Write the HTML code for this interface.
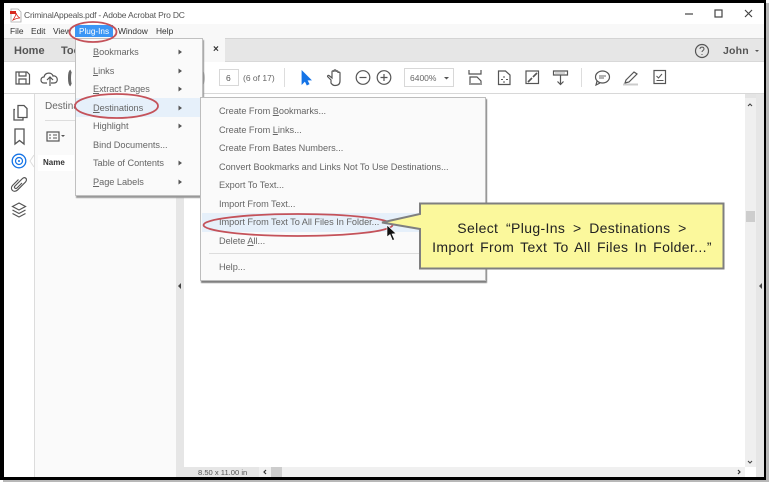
<!DOCTYPE html>
<html><head><meta charset="utf-8">
<style>
html,body{margin:0;padding:0;background:#fff}
#p{position:relative;width:769px;height:482px;overflow:hidden;background:#fff;font-family:"Liberation Sans",sans-serif;color:#555}
#p div{position:absolute}
.t{white-space:nowrap;font-size:8.6px;line-height:12px;filter:blur(.3px)}
.m{font-size:9.2px;color:#666;letter-spacing:-.03px;white-space:nowrap;line-height:12px;filter:blur(.3px)}
u{text-decoration:underline}
svg.i{filter:blur(.3px)}
</style></head><body>
<div id="p">
<!-- shadow -->
<div style="left:3px;top:3px;width:766px;height:479px;background:#b8b8b8"></div>
<div style="left:0;top:0;width:766px;height:480px;background:#000"></div>
<div id="w" style="left:4px;top:3px;width:760px;height:474px;background:#fff;overflow:hidden"></div>

<div style="left:4px;top:24px;width:760px;height:14px;background:#f8f8f8"></div>
<div style="left:4px;top:38px;width:760px;height:24px;background:#e6e6e6;border-top:1px solid #d4d4d4;border-bottom:1px solid #d8d8d8;box-sizing:border-box"></div>
<div style="left:203px;top:38px;width:22px;height:24px;background:#f8f8f8"></div>
<div style="left:4px;top:93px;width:760px;height:1px;background:#d8d8d8"></div>
<!-- left panels -->
<div style="left:4px;top:94px;width:30px;height:383px;background:#fff"></div>
<div style="left:34px;top:94px;width:1px;height:383px;background:#dcdcdc"></div>
<div style="left:35px;top:94px;width:141px;height:383px;background:#fafafa"></div>
<div style="left:176px;top:94px;width:8px;height:383px;background:#e6e6e6"></div>
<div style="left:38px;top:155px;width:36px;height:16px;background:#fff"></div>
<!-- right scroll -->
<div style="left:745px;top:94px;width:11px;height:373px;background:#efefef"></div>
<div style="left:745px;top:94px;width:11px;height:4px;background:#e4e4e4"></div>
<div style="left:746px;top:211px;width:9px;height:11px;background:#cdcdcd"></div>
<div style="left:756px;top:94px;width:8px;height:383px;background:#e6e6e6"></div>
<div style="left:184px;top:467px;width:561px;height:10px;background:#f0f0f0"></div>
<div style="left:271px;top:467px;width:11px;height:10px;background:#cdcdcd"></div>
<div style="left:184px;top:467px;width:75px;height:10px;background:#e6e6e6"></div>

<!-- text top -->
<div class="t" style="left:24px;top:9px;color:#555;font-size:8.5px;letter-spacing:-.2px">CriminalAppeals.pdf - Adobe Acrobat Pro DC</div>
<div class="t" style="left:10px;top:25px;color:#333;font-size:8.4px">File</div>
<div class="t" style="left:31px;top:25px;color:#333;font-size:8.4px">Edit</div>
<div class="t" style="left:53px;top:25px;color:#333;font-size:8.4px">View</div>
<div style="left:75px;top:25px;width:38px;height:12px;background:#3b96f5"></div>
<div class="t" style="left:79px;top:26px;color:#fff;font-size:8.2px">Plug-Ins</div>
<div class="t" style="left:118px;top:25px;color:#333;font-size:8.4px">Window</div>
<div class="t" style="left:156px;top:25px;color:#333;font-size:8.4px">Help</div>
<div class="t" style="left:14px;top:44px;color:#555;font-size:11px;font-weight:bold;line-height:14px">Home</div>
<div class="t" style="left:61px;top:44px;color:#555;font-size:11px;font-weight:bold;line-height:14px">Tools</div>
<div class="t" style="left:213px;top:44px;color:#333;font-size:10px;font-weight:bold">×</div>
<div class="t" style="left:723px;top:44px;color:#555;font-size:10.5px;font-weight:bold;line-height:14px;letter-spacing:.2px">John</div>
<div class="t" style="left:45px;top:101px;color:#666;font-size:10px">Destinations</div>
<div style="left:45px;top:120px;width:125px;height:1px;background:#ddd"></div>
<div class="t" style="left:43px;top:157px;color:#333;font-size:8px;font-weight:bold">Name</div>
<div style="left:219px;top:69px;width:20px;height:17px;border:1px solid #d8d8d8;background:#fff;box-sizing:border-box"></div>
<div class="t" style="left:226px;top:72px;color:#555;font-size:8.5px">6</div>
<div class="t" style="left:243px;top:72px;color:#666;font-size:8.5px">(6 of 17)</div>
<div style="left:404px;top:68px;width:50px;height:19px;border:1px solid #d8d8d8;background:#fff;box-sizing:border-box"></div>
<div class="t" style="left:410px;top:72px;color:#666;font-size:8.5px">6400%</div>
<div class="t" style="left:198px;top:467px;color:#555;font-size:7.6px;line-height:12px">8.50 x 11.00 in</div>

<!-- toolbar icons -->
<svg class="i" style="position:absolute;left:0;top:0" width="769" height="482" fill="none" stroke="#555" stroke-width="1.2">
<path d="M11 9h7l3 3v10H11z" fill="#fff" stroke="#aaa" stroke-width=".8"/><path d="M10 11h6v3h-6z" fill="#d8281e" stroke="none"/><path d="M13 20c2-3 3-5 3-7 1 3 2 4 4 5-3 0-5 1-7 2z" stroke="#d8281e" stroke-width=".8"/>
<path d="M685 14h8" stroke="#444"/><rect x="715" y="10" width="7" height="7" stroke="#444"/><path d="M745 10l7 7M752 10l-7 7" stroke="#444"/>
<circle cx="702" cy="51" r="6.500"/><path d="M700 49c0-2.500 4-2.500 4 0 0 1.500-2 1.500-2 3M702 54v1" stroke-width="1"/>
<path d="M755 50h4l-2 2z" fill="#555" stroke="none"/>
<path d="M16 72h11l2.500 2.500V84H16zM19 72v4h7v-4M19 84v-5h7v5"/>
<path d="M47 83h-3c-4 0-4-6 0-6 1-5 8-5 9-1 5-1 6 7 1 7h-3M50 86v-9M47 80l3-3 3 3"/>
<path d="M71 71c-2 1-2 13 0 14" stroke-width="3" stroke="#666"/>
<path d="M203 72c1 3 1 9 0 12" stroke="#777" stroke-width="1.500"/>
<path d="M284.500 68v19M581.500 68v19" stroke="#ddd" stroke-width="1"/>
<path d="M302 71l0 13 3-3 2 4 2-1-2-4 4 0z" fill="#1473e6" stroke="#1473e6" stroke-width=".8"/>
<path d="M331 80l-3-3c-1-1 0-2 1-1.500l3 2.500v-6c0-1.500 2-1.500 2 0v-1c0-1.500 2-1.500 2 0v1c0-1.500 2-1.500 2 0v1c0-1.200 2-1.200 2 0v8c0 3-2 4.500-5 4.500-2 0-3-1-4-2.500z"/>
<circle cx="363" cy="77.500" r="6.800"/><path d="M359.500 77.500h7"/>
<circle cx="384" cy="77.500" r="6.800"/><path d="M380.500 77.500h7M384 74v7"/>
<path d="M444 77h5l-2.500 2.500z" fill="#555" stroke="none"/>
<path d="M469 70v4h12v-4M470 85v-8h7l4 4v4M471 84h9"/>
<path d="M498.500 71h7l4.500 4v9.500h-11.500z"/><path d="M504 76v2M504 81v2M501 79.500h2M506 79.500h2" stroke-width="1"/>
<rect x="526" y="71" width="12.500" height="12.500"/><path d="M528 82l4-4M537 73l-4 4" stroke-width="1.600"/>
<path d="M553.500 71h14v4h-14zM560.500 75v9.500M557.500 81.500l3 3 3-3"/><path d="M555.500 73h10" stroke-dasharray="1 1" stroke-width="1"/>
<ellipse cx="602.500" cy="77" rx="7" ry="6"/><path d="M597 81l-1 4 4-2"/><path d="M599 76h7M599 78h5" stroke="#888"/>
<path d="M626 80l8-8 3 2-8 8-4 1z"/>
<path d="M623 84.500h15" stroke="#ccc" stroke-width="2"/>
<rect x="654" y="70.500" width="11.500" height="13"/><path d="M656.500 76l2 2 3.500-4M656.500 80.500h7" stroke-width="1"/>
<!-- rail -->
<path d="M18 105.500h6l3 3v9h-9zM15 109.500h-1v10.500h9v-2.500" stroke-width="1.300"/>
<path d="M15 129h9v15l-4.500-3.500-4.500 3.500z" stroke-width="1.300"/>
<circle cx="19" cy="161" r="6.800" stroke="#1473e6" stroke-width="1.300"/><circle cx="19" cy="161" r="3.500" stroke="#1473e6" stroke-width="1.200"/><circle cx="19" cy="161" r="1" fill="#1473e6" stroke="none"/>
<path d="M22 183l-5 5c-1.500 1.500-3.500-.5-2-2l7-7c3-3 6 0 3.500 3l-8 8c-4 3.500-8-1-5-4.500l6-6" stroke-width="1.200"/>
<path d="M19 203l6.500 3.500-6.500 3.500-6.500-3.500zM12.500 210l6.500 3.500 6.500-3.500M12.500 213.500l6.500 3.500 6.500-3.500" stroke-width="1.200"/>
<path d="M34 155l-4 6 4 6" stroke="#ddd" fill="#fff" stroke-width="1"/>
<rect x="47" y="132" width="12" height="9"/><path d="M49 135h2M53 135h4M49 138h2M53 138h4" stroke-width="1"/><path d="M61 135h4l-2 2z" fill="#555" stroke="none"/>
<path d="M748 106l2-2 2 2M748 461l2 2 2-2" stroke-width="1.100" stroke="#444"/>
<path d="M181 283v6l-3-3zM762 283v6l-3-3z" fill="#444" stroke="none"/>
<path d="M266 470l-2 2 2 2M738 470l2 2-2 2" stroke-width="1.200" stroke="#333"/>
</svg>

<!-- menu 1 -->
<div style="left:75px;top:38px;width:128px;height:158px;background:#fafafa;border:1px solid #c0c0c0;box-sizing:border-box;box-shadow:1px 2px 1px #999"></div>
<div style="left:76px;top:98px;width:126px;height:19px;background:#e6f0fa"></div>
<div class="m" style="left:93px;top:46px"><u>B</u>ookmarks</div>
<div class="m" style="left:93px;top:65px"><u>L</u>inks</div>
<div class="m" style="left:93px;top:83px"><u>E</u>xtract Pages</div>
<div class="m" style="left:93px;top:102px"><u>D</u>estinations</div>
<div class="m" style="left:93px;top:120px">Highlight</div>
<div class="m" style="left:93px;top:139px">Bind Documents...</div>
<div class="m" style="left:93px;top:157px">Table of Contents</div>
<div class="m" style="left:93px;top:176px"><u>P</u>age Labels</div>
<svg class="i" style="position:absolute;left:0;top:0" width="769" height="482" fill="#555">
<path d="M178.500 49.500l3.500 2.500-3.500 2.500zM178.500 68.500l3.500 2.500-3.500 2.500zM178.500 86.500l3.500 2.500-3.500 2.500zM178.500 105.500l3.500 2.500-3.500 2.500zM178.500 123.500l3.500 2.500-3.500 2.500zM178.500 160.500l3.500 2.500-3.500 2.500zM178.500 179.500l3.500 2.500-3.500 2.500z"/>
</svg>
<!-- submenu -->
<div style="left:200px;top:97px;width:286px;height:184px;background:#fafafa;border:1px solid #bdbdbd;box-sizing:border-box;box-shadow:1px 2px 1px #808080"></div>
<div style="left:202px;top:213px;width:283px;height:19px;background:#e6f0fa"></div>
<div class="m" style="left:219px;top:105px">Create From <u>B</u>ookmarks...</div>
<div class="m" style="left:219px;top:124px">Create From <u>L</u>inks...</div>
<div class="m" style="left:219px;top:142px">Create From Bates Numbers...</div>
<div class="m" style="left:219px;top:161px">Convert Bookmarks and Links Not To Use Destinations...</div>
<div class="m" style="left:219px;top:179px">Export To Text...</div>
<div class="m" style="left:219px;top:198px">Import From Text...</div>
<div class="m" style="left:219px;top:216px">Import From Text To All Files In Folder...</div>
<div class="m" style="left:219px;top:235px">Delete <u>A</u>ll...</div>
<div style="left:209px;top:253px;width:270px;height:1px;background:#ddd"></div>
<div class="m" style="left:219px;top:261px">Help...</div>

<!-- ellipses, callout -->
<svg style="position:absolute;left:0;top:0" width="769" height="482" fill="none">
<ellipse cx="93" cy="32" rx="23.500" ry="10" stroke="#c4525a" stroke-width="1.800"/>
<ellipse cx="116.500" cy="106" rx="41.500" ry="12" stroke="#c4525a" stroke-width="1.800"/>
<ellipse cx="298" cy="225" rx="94.500" ry="11" stroke="#c4525a" stroke-width="1.800"/>
<path d="M387 225l0 12 3-2.500 2.500 6 2-1-2.500-5.500 4-.5z" fill="#111" stroke="#fff" stroke-width=".6"/>
<path d="M420 203.500H723.500V268.500H420V229L382 222.500 420 214z" fill="#fbf89c" stroke="#7f7f7f" stroke-width="2"/>
</svg>
<div style="left:420px;top:219px;width:304px;text-align:center;font-size:14px;line-height:19px;color:#222;white-space:nowrap;letter-spacing:.35px;word-spacing:2px"><span style="word-spacing:3.500px">Select “Plug-Ins &gt; Destinations &gt;</span><br>Import From Text To All Files In Folder...”</div>
</div>
</body></html>
